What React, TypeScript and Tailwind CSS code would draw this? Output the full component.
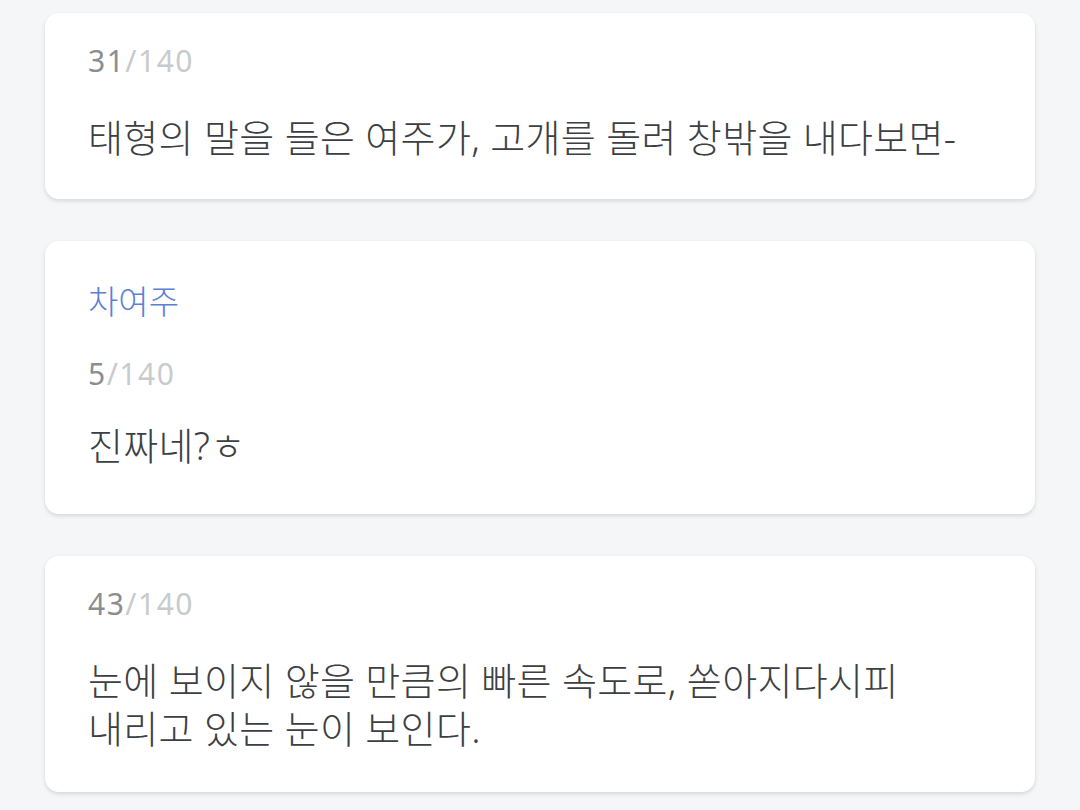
import React from "react"

type Line = {
  name?: string
  count: number
  text: string[]
  pb: string
}

const lines: Line[] = [
  { count: 31, text: ["태형의 말을 들은 여주가, 고개를 돌려 창밖을 내다보면-"], pb: "pb-[38px]" },
  { name: "차여주", count: 5, text: ["진짜네?ㅎ"], pb: "pb-[45px]" },
  {
    count: 43,
    text: ["눈에 보이지 않을 만큼의 빠른 속도로, 쏟아지다시피", "내리고 있는 눈이 보인다."],
    pb: "pb-[40px]",
  },
]

function Counter({ n }: { n: number }) {
  return (
    <div className="text-[30px] leading-[40px] tracking-[1.5px]">
      <span className="text-[#8a8d91]">{n}</span>
      <span className="text-[#c8cbce]">/140</span>
    </div>
  )
}

function Card({ line }: { line: Line }) {
  return (
    <div className={`bg-white rounded-[14px] shadow-[0_2px_4px_rgba(0,0,0,0.13)] px-[43px] pt-[28px] ${line.pb}`}>
      {line.name && (
        <div className="mt-[13px] mb-[32px] text-[33px] leading-[40px] font-light text-[#5d80d6]">{line.name}</div>
      )}
      <Counter n={line.count} />
      <div className={line.name ? "mt-[27px]" : "mt-[32px]"}>
        {line.text.map((t) => (
          <p key={t} className="text-[38px] leading-[48px] tracking-[0.3px] font-light text-[#3d4043]">
            {t}
          </p>
        ))}
      </div>
    </div>
  )
}

export default function App() {
  return (
    <div
      className="min-h-[810px] bg-[#f4f6f7] px-[45px] pt-[13px] flex flex-col gap-[42px]"
      style={{ fontFamily: '"Noto Sans", "Noto Sans CJK KR", sans-serif' }}
    >
      {lines.map((l) => (
        <Card key={l.count} line={l} />
      ))}
    </div>
  )
}
